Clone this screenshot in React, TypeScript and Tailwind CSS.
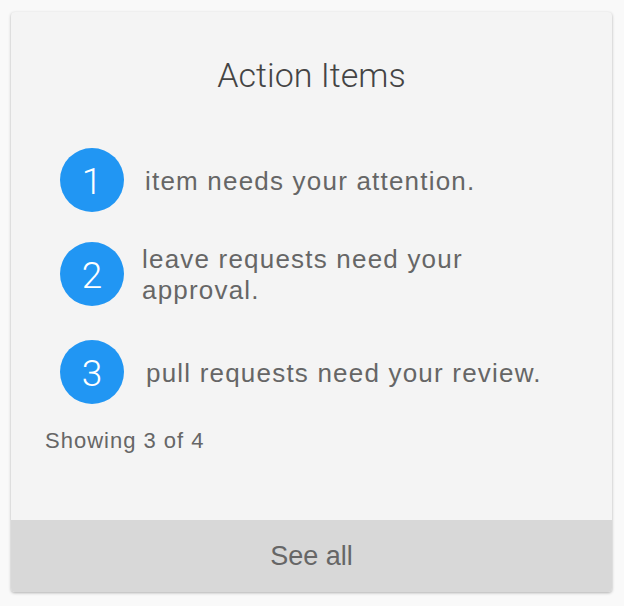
import React from "react";

const items = [
  { n: 1, text: "item needs your attention.", ml: "ml-[21px]" },
  { n: 2, text: "leave requests need your approval.", ml: "ml-[18px]" },
  { n: 3, text: "pull requests need your review.", ml: "ml-[22px]" },
];

export default function App() {
  return (
    <div className="w-[624px] h-[606px] bg-[#f9f9f9] pt-[12px] pl-[11px]" style={{ fontFamily: '"Liberation Sans", Arial, sans-serif' }}>
      <div className="w-[601px] h-[580px] rounded-[4px] bg-[#f4f4f4] flex flex-col overflow-hidden shadow-[0_1px_3px_rgba(0,0,0,0.3)]">
        <div className="flex-1 flex flex-col">
          <div className="pt-[43px] h-[91px] text-center text-[34px] leading-[40px] text-[#444]" style={{ fontFamily: 'Roboto, "Liberation Sans", sans-serif', fontWeight: 300 }}>
            Action Items
          </div>
          <div className="mt-[45px] flex flex-col pl-[49px]">
            {items.map((it, i) => (
              <div key={it.n} className={`flex items-center ${i === 1 ? "mt-[30px]" : i === 2 ? "mt-[34px]" : ""}`}>
                <div className="w-[64px] h-[64px] shrink-0 rounded-full bg-[#2196f3] flex items-center justify-center text-white text-[37px] leading-none pt-[2px]" style={{ fontFamily: 'Roboto, "Liberation Sans", sans-serif', fontWeight: 300 }}>
                  {it.n}
                </div>
                <div className={`${it.ml} text-[26px] leading-[31px] tracking-[1.2px] text-[#666] w-[410px] pt-[2px]`}>{it.text}</div>
              </div>
            ))}
          </div>
          <div className="mt-[25px] pl-[34px] text-[22px] leading-[24px] tracking-[1px] text-[#666]">Showing 3 of 4</div>
        </div>
        <div className="h-[72px] bg-[#d8d8d8] flex items-center justify-center text-[27px] text-[#666]">See all</div>
      </div>
    </div>
  );
}
